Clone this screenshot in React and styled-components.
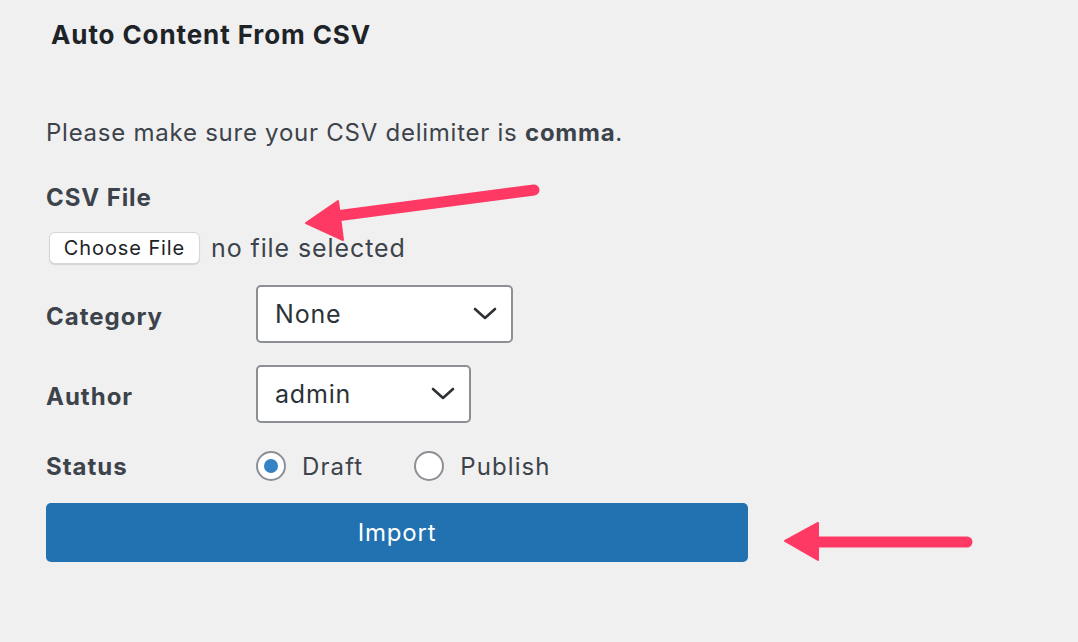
import React from "react";
import styled, { createGlobalStyle } from "styled-components";

const Global = createGlobalStyle`
  html, body { margin: 0; padding: 0; background: #f0f0f1; }
  body { font-family: Inter, "Noto Sans", "Liberation Sans", sans-serif; color: #3c434a; }
`;

const Page = styled.div`
  position: relative;
  width: 1078px;
  height: 642px;
  box-sizing: border-box;
  padding: 0 0 0 46px;
  overflow: hidden;
`;

const Title = styled.h2`
  margin: 0;
  padding: 18px 0 0 5px;
  font-size: 26px;
  line-height: 34px;
  font-weight: 700;
  color: #1d2327;
  letter-spacing: 0.9px;
`;

const Note = styled.p`
  margin: 0;
  padding-top: 65px;
  font-size: 24px;
  line-height: 32px;
  letter-spacing: 0.75px;
  color: #3c434a;
  strong { font-weight: 700; color: #3c434a; }
`;

const BlockLabel = styled.div`
  margin-top: 33px;
  font-size: 24px;
  line-height: 32px;
  font-weight: 700;
  letter-spacing: 0.9px;
  color: #3c434a;
`;

const FileRow = styled.div`
  display: flex;
  align-items: center;
  gap: 11px;
  margin-top: 18px;
  padding-left: 3px;
`;

const FileButton = styled.button`
  width: 151px;
  height: 32px;
  box-sizing: border-box;
  background: #fff;
  border: 1px solid #d6d6d6;
  border-radius: 6px;
  box-shadow: 0 1px 1px rgba(0, 0, 0, 0.12);
  font-family: inherit;
  font-size: 20px;
  letter-spacing: 0.9px;
  color: #1d2327;
  padding: 0;
`;

const FileText = styled.span`
  font-size: 25px;
  letter-spacing: 0.9px;
  color: #3c434a;
`;

const FormGrid = styled.div`
  display: grid;
  grid-template-columns: 210px auto;
  grid-template-rows: 58px 58px 30px;
  align-items: center;
  row-gap: 22px;
  margin-top: 21px;
`;

const RowLabel = styled.div`
  font-size: 24px;
  font-weight: 700;
  letter-spacing: 1px;
  color: #3c434a;
  padding-top: ${(p) => (p.$pad ? p.$pad : 4)}px;
`;

const Select = styled.div`
  width: ${(p) => p.$w}px;
  height: 58px;
  box-sizing: border-box;
  background: #fff;
  border: 2px solid #8c8f94;
  border-radius: 5px;
  display: flex;
  align-items: center;
  justify-content: space-between;
  padding: 0 14px 0 17px;
  font-size: 25px;
  letter-spacing: 0.8px;
  color: #2c3338;
  justify-self: start;
`;

const StatusRow = styled.div`
  display: flex;
  align-items: center;
  gap: 51px;
  margin-top: 12px;
`;

const RadioItem = styled.label`
  display: flex;
  align-items: center;
  gap: 16px;
  font-size: 24px;
  letter-spacing: 1.1px;
  color: #3c434a;
`;

const RadioCircle = styled.span`
  width: 30px;
  height: 30px;
  box-sizing: border-box;
  border-radius: 50%;
  border: 2px solid #8c8f94;
  background: #fff;
  display: flex;
  align-items: center;
  justify-content: center;
  &::after {
    content: "";
    width: 14px;
    height: 14px;
    border-radius: 50%;
    background: ${(p) => (p.$checked ? "#3582c4" : "transparent")};
  }
`;

const ImportButton = styled.button`
  display: block;
  margin-top: 28px;
  width: 702px;
  height: 59px;
  background: #2271b1;
  border: none;
  border-radius: 5px;
  color: #fff;
  font-family: inherit;
  font-size: 24px;
  letter-spacing: 0.8px;
  padding: 0;
`;

const Overlay = styled.svg`
  position: absolute;
  left: 0;
  top: 0;
  pointer-events: none;
`;

const Chevron = () => (
  <svg width="24" height="14" viewBox="0 0 24 14">
    <path d="M2 2 L12 11 L22 2" fill="none" stroke="#2c3338" strokeWidth="2.6" strokeLinecap="round" strokeLinejoin="round" />
  </svg>
);

export default function App() {
  return (
    <>
      <Global />
      <Page>
        <Title>Auto Content From CSV</Title>
        <Note>
          Please make sure your CSV delimiter is <strong>comma</strong>.
        </Note>
        <BlockLabel>CSV File</BlockLabel>
        <FileRow>
          <FileButton>Choose File</FileButton>
          <FileText>no file selected</FileText>
        </FileRow>
        <FormGrid>
          <RowLabel>Category</RowLabel>
          <Select $w={257}>
            <span>None</span>
            <Chevron />
          </Select>
          <RowLabel>Author</RowLabel>
          <Select $w={215}>
            <span>admin</span>
            <Chevron />
          </Select>
          <RowLabel $pad={12}>Status</RowLabel>
          <StatusRow>
            <RadioItem>
              <RadioCircle $checked />
              Draft
            </RadioItem>
            <RadioItem>
              <RadioCircle />
              Publish
            </RadioItem>
          </StatusRow>
        </FormGrid>
        <ImportButton>Import</ImportButton>
        <Overlay width="1078" height="642" viewBox="0 0 1078 642">
          <g fill="#fe3a64" stroke="#fe3a64" strokeLinejoin="round">
            <line x1="534" y1="190" x2="336" y2="216" strokeWidth="11" strokeLinecap="round" />
            <polygon points="306,223 338,201 343,240" strokeWidth="2" />
            <line x1="815" y1="542" x2="967" y2="542" strokeWidth="11" strokeLinecap="round" />
            <polygon points="785,541 818,523 818,560" strokeWidth="2" />
          </g>
        </Overlay>
      </Page>
    </>
  );
}
